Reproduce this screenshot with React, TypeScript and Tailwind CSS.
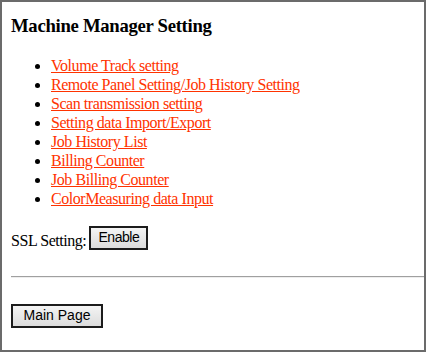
const links = [
  'Volume Track setting',
  'Remote Panel Setting/Job History Setting',
  'Scan transmission setting',
  'Setting data Import/Export',
  'Job History List',
  'Billing Counter',
  'Job Billing Counter',
  'ColorMeasuring data Input',
];

function OldButton({ label, width }: { label: string; width: string }) {
  return (
    <button
      className={`${width} h-[24px] border-2 border-[#1c1c1c] bg-gradient-to-b from-[#f4f4f4] to-[#dcdcdc] text-[14px] leading-none text-black font-['Liberation_Sans',Arial,sans-serif] flex items-center justify-center pb-[2px]`}
    >
      {label}
    </button>
  );
}

export default function App() {
  return (
    <div className="w-[426px] h-[352px] border-2 border-[#6b6b6b] bg-white font-['Liberation_Serif','Times_New_Roman',serif] text-black">
      <div className="pl-[9px] pt-[13px]">
        <h3 className="text-[18.72px] leading-[22px] font-bold tracking-[-0.3px]">Machine Manager Setting</h3>

        <ul className="mt-[19px] list-disc pl-[40px] text-[16px] leading-[19px] tracking-[-0.45px]">
          {links.map((l) => (
            <li key={l}>
              <a href="#" className="text-[#ff3300] underline">
                {l}
              </a>
            </li>
          ))}
        </ul>

        <div className="mt-[18px] flex items-end text-[16px] leading-[19px] tracking-[-0.45px]">
          <span>SSL Setting:</span>
          <span className="ml-[3px]">
            <OldButton label="Enable" width="w-[59px]" />
          </span>
        </div>

        <hr className="mt-[26px] border-0 border-t border-t-[#a0a0a0] border-b border-b-[#eeeeee]" />

        <div className="mt-[26px]">
          <OldButton label="Main Page" width="w-[92px]" />
        </div>
      </div>
    </div>
  );
}
